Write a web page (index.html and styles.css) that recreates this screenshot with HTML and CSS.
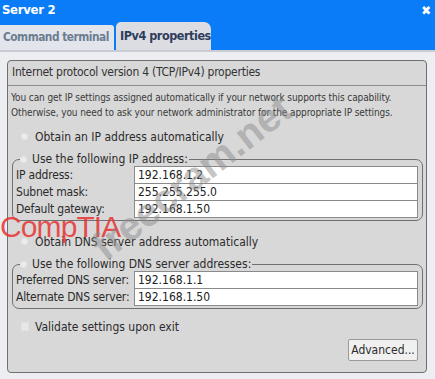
FILE: index.html
```html
<!DOCTYPE html>
<html>
<head>
<meta charset="utf-8">
<link rel="stylesheet" href="styles.css">
</head>
<body>
<div class="window">
  <div class="titlebar">
    <div class="title-row">
      <span class="title">Server 2</span>
      <span class="close">✖</span>
    </div>
    <div class="tabs">
      <div class="tab">Command terminal</div>
      <div class="tab active">IPv4 properties</div>
    </div>
  </div>
  <div class="content">
    <div class="panel">
      <div class="panel-head">Internet protocol version 4 (TCP/IPv4) properties</div>
      <div class="panel-body">
        <p class="desc">You can get IP settings assigned automatically if your network supports this capability.<br>Otherwise, you need to ask your network administrator for the appropriate IP settings.</p>
        <div class="option first"><span class="radio"></span>Obtain an IP address automatically</div>
        <fieldset class="group">
          <legend><span class="radio"></span>Use the following IP address:</legend>
          <div class="row"><span class="label">IP address:</span><span class="input">192.168.1.2</span></div>
          <div class="row"><span class="label">Subnet mask:</span><span class="input">255.255.255.0</span></div>
          <div class="row"><span class="label">Default gateway:</span><span class="input">192.168.1.50</span></div>
        </fieldset>
        <div class="option second"><span class="radio"></span>Obtain DNS server address automatically</div>
        <fieldset class="group">
          <legend><span class="radio"></span>Use the following DNS server addresses:</legend>
          <div class="row"><span class="label">Preferred DNS server:</span><span class="input">192.168.1.1</span></div>
          <div class="row"><span class="label">Alternate DNS server:</span><span class="input">192.168.1.50</span></div>
        </fieldset>
        <div class="option check-opt"><span class="check"></span>Validate settings upon exit</div>
        <div class="actions"><span class="button">Advanced...</span></div>
      </div>
    </div>
  </div>
  <div class="wm-comptia">CompTIA</div>
  <div class="wm-freecram">freecram.net</div>
</div>
</body>
</html>
```
FILE: styles.css
```css
* { box-sizing: border-box; }
html, body { margin: 0; padding: 0; }
body {
  width: 435px;
  height: 379px;
  overflow: hidden;
  font-family: "DejaVu Sans Condensed", "DejaVu Sans", sans-serif;
  color: #2b2b2b;
  background: #eceef1;
}
.window {
  position: relative;
  width: 435px;
  height: 379px;
  display: flex;
  flex-direction: column;
}
.titlebar {
  background: #0a7cf8;
  height: 50px;
  display: flex;
  flex-direction: column;
}
.title-row {
  height: 23px;
  display: flex;
  justify-content: space-between;
  align-items: flex-start;
  padding: 2px 4px 0 2px;
}
.title {
  color: #fff;
  font-weight: bold;
  font-size: 13px;
  letter-spacing: -0.3px;
}
.close {
  color: #fff;
  font-size: 13px;
  line-height: 16px;
  margin-top: 1px;
}
.tabs {
  display: flex;
  align-items: flex-end;
  gap: 2px;
  flex: 1;
}
.tab {
  height: 25px;
  padding: 5px 0 0 3px;
  background: #e2e6ec;
  color: #6d7d90;
  font-weight: bold;
  font-size: 11.8px;
  border-top-right-radius: 3px;
  width: 114px;
  white-space: nowrap;
  letter-spacing: -0.5px;
}
.tab.active {
  height: 28px;
  width: 95px;
  padding-top: 6px;
  padding-left: 4px;
  font-size: 12.5px;
  letter-spacing: -0.45px;
  background: #dcdde2;
  color: #2e3e5c;
  border-radius: 5px 7px 0 0;
}
.content {
  flex: 1;
  border-top: 2px solid #c9cdd3;
  padding: 8px 8px 6px 7px;
}
.panel {
  height: 313px;
  background: #d8d8d8;
  border: 1px solid #6f6f6f;
  border-radius: 4px;
  display: flex;
  flex-direction: column;
}
.panel-head {
  height: 25px;
  padding: 4px 0 0 4px;
  font-size: 12px;
  letter-spacing: -0.25px;
  border-bottom: 1px solid #8c8c8c;
  color: #333;
}
.panel-body {
  padding: 4px 3px 0 3px;
  display: flex;
  flex-direction: column;
}
.desc {
  margin: 0;
  font-size: 10px;
  line-height: 15px;
  letter-spacing: -0.1px;
  color: #3a3a3a;
}
.option {
  display: flex;
  align-items: center;
  font-size: 12px;
  height: 15px;
  padding-left: 10px;
  margin-top: 11px;
}
.option.first { margin-top: 9px; }
.option.second { margin-top: 13px; }
.radio {
  display: inline-block;
  width: 7px;
  height: 7px;
  border-radius: 50%;
  background: #ececec;
  border: 1px solid #e6e6e6;
  margin-right: 7px;
}
.check {
  display: inline-block;
  width: 8px;
  height: 9px;
  background: #e8e8e8;
  border: 1px solid #e0e0e0;
  margin-right: 6px;
}
.group {
  margin: 8px 0 0 1px;
  padding: 0 4px 3px 2px;
  width: 411px;
  border: 1px solid #707070;
  border-radius: 7px;
}
.group legend {
  font-size: 12px;
  padding: 0 1px 0 0;
  margin-left: 5px;
  display: flex;
  align-items: center;
  height: 14px;
}
.group legend .radio { margin-right: 5px; }
.row {
  display: flex;
  align-items: center;
  height: 17px;
  font-size: 12px;
}
.label {
  width: 119px;
  padding-left: 1px;
  flex: none;
  letter-spacing: -0.2px;
}
.input {
  flex: 1;
  height: 18px;
  background: #fff;
  border: 1px solid #8a8a8a;
  padding: 1px 0 0 3px;
  color: #222;
}
.check-opt { margin-top: 10px; }
.actions {
  display: flex;
  justify-content: flex-end;
  padding-right: 5px;
  margin-top: 5px;
}
.button {
  width: 70px;
  height: 22px;
  font-size: 12px;
  background: #f0f0f0;
  border: 1px solid #9a9a9a;
  border-radius: 2px;
  display: flex;
  align-items: center;
  justify-content: center;
}
.wm-comptia {
  position: absolute;
  left: 0;
  top: 210px;
  font-family: "Liberation Sans", Arial, sans-serif;
  font-size: 30px;
  color: rgba(232, 50, 50, 0.85);
  letter-spacing: -0.9px;
}
.wm-freecram {
  position: absolute;
  left: 97px;
  top: 231px;
  line-height: 40px;
  font-family: "Liberation Sans", Arial, sans-serif;
  font-weight: bold;
  font-size: 40px;
  color: rgba(140, 140, 140, 0.5);
  transform: rotate(-38deg);
  transform-origin: left center;
}
```
